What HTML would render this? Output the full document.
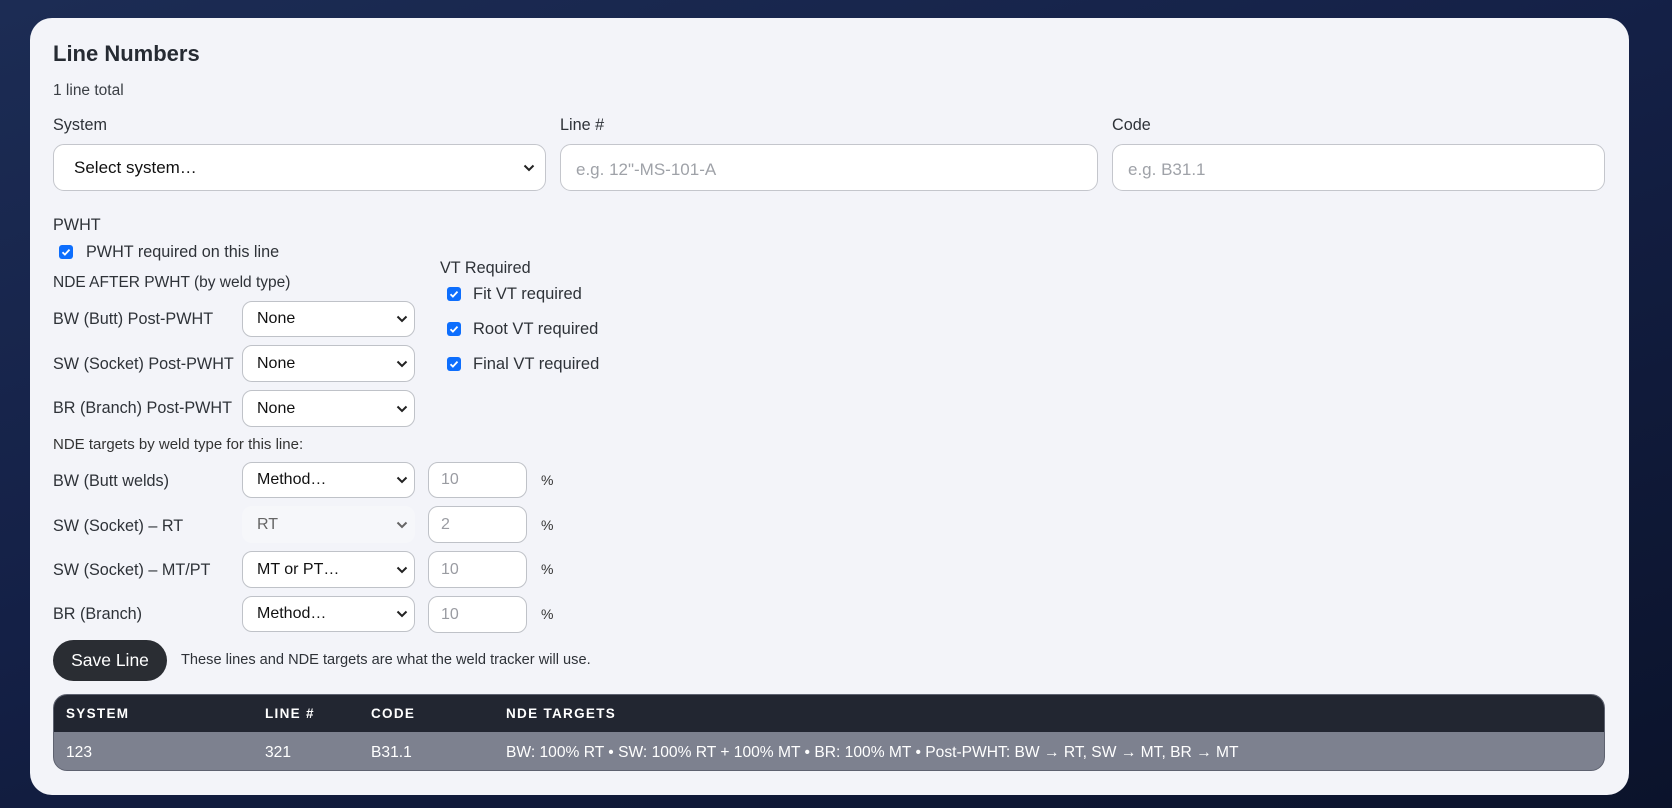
<!DOCTYPE html>
<html><head><meta charset="utf-8"><style>
*{box-sizing:border-box;margin:0;padding:0}
body{width:1672px;height:808px;overflow:hidden;background:linear-gradient(160deg,#1c2c54 0%,#142046 45%,#0b132b 100%);font-family:"Liberation Sans",sans-serif;color:#2b2f36;position:relative}
.card{position:absolute;left:30px;top:18px;width:1599px;height:777px;background:#f3f4f9;border-radius:22px}
.a{position:absolute;white-space:nowrap}
.lbl{font-size:16.2px;color:#2e3238}
.inp{position:absolute;background:#fff;border:1px solid #c4c6cc;border-radius:11px;font-size:17px}
.sel{position:absolute;background:#fff;border:1px solid #bfc2c8;border-radius:10px;font-size:16px;color:#111;padding-left:14px;display:flex;align-items:center}
.sel svg{position:absolute;right:6px;top:50%;margin-top:-4px}
.num{position:absolute;background:#fff;border:1px solid #bfc2c8;border-radius:10px;font-size:16px;color:#9a9ca2;padding-left:12px;display:flex;align-items:center}
.cb{position:absolute;width:14px;height:14px;background:#0d6efd;border-radius:3px}
.cb svg{position:absolute;left:1px;top:1px}
.pct{position:absolute;font-size:14px;color:#333}
.th{position:absolute;top:11px;font-size:13.5px;font-weight:bold;color:#fff;letter-spacing:1.3px;white-space:nowrap}
.td{position:absolute;top:49px;font-size:15.6px;color:#fff;white-space:nowrap}
</style></head><body>
<div class="card"></div>
<div class="a" style="left:53px;top:41px;font-size:22px;font-weight:bold;color:#262b33">Line Numbers</div>
<div class="a" style="left:53px;top:82px;font-size:15.5px;color:#3a3e44">1 line total</div>
<div class="a lbl" style="left:53px;top:116px">System</div>
<div class="a lbl" style="left:560px;top:116px">Line #</div>
<div class="a lbl" style="left:1112px;top:116px">Code</div>
<div class="sel" style="left:53px;top:144px;width:493px;height:47px;border-radius:11px;padding-left:20px;font-size:17px;border-color:#c4c6cc">Select system…<svg width="12" height="8" viewBox="0 0 12 8" style="right:10px"><path d="M1.5 1.5l4.5 4.5 4.5-4.5" stroke="#222" stroke-width="2" fill="none"/></svg></div>
<div class="inp" style="left:560px;top:144px;width:538px;height:47px;padding:15px 0 0 15px;color:#9fa2a8">e.g. 12"-MS-101-A</div>
<div class="inp" style="left:1112px;top:144px;width:493px;height:47px;padding:15px 0 0 15px;color:#9fa2a8">e.g. B31.1</div>

<div class="a lbl" style="left:53px;top:216px">PWHT</div>
<div class="cb" style="left:59px;top:245px"><svg width="12" height="12" viewBox="0 0 12 12"><path d="M2.5 6.2l2.4 2.4 4.6-5" stroke="#fff" stroke-width="1.8" fill="none"/></svg></div>
<div class="a lbl" style="left:86px;top:243px">PWHT required on this line</div>
<div class="a lbl" style="left:53px;top:274px;font-size:15.5px">NDE AFTER PWHT (by weld type)</div>
<div class="a lbl" style="left:440px;top:259px">VT Required</div>
<div class="cb" style="left:447px;top:287px"><svg width="12" height="12" viewBox="0 0 12 12"><path d="M2.5 6.2l2.4 2.4 4.6-5" stroke="#fff" stroke-width="1.8" fill="none"/></svg></div>
<div class="a lbl" style="left:473px;top:285px;font-size:16.5px">Fit VT required</div>
<div class="cb" style="left:447px;top:322px"><svg width="12" height="12" viewBox="0 0 12 12"><path d="M2.5 6.2l2.4 2.4 4.6-5" stroke="#fff" stroke-width="1.8" fill="none"/></svg></div>
<div class="a lbl" style="left:473px;top:320px;font-size:16.5px">Root VT required</div>
<div class="cb" style="left:447px;top:357px"><svg width="12" height="12" viewBox="0 0 12 12"><path d="M2.5 6.2l2.4 2.4 4.6-5" stroke="#fff" stroke-width="1.8" fill="none"/></svg></div>
<div class="a lbl" style="left:473px;top:355px;font-size:16.5px">Final VT required</div>

<div class="a lbl" style="left:53px;top:310px">BW (Butt) Post-PWHT</div>
<div class="sel" style="left:242px;top:301px;width:173px;height:36px">None<svg width="12" height="8" viewBox="0 0 12 8"><path d="M1.5 1.5l4.5 4.5 4.5-4.5" stroke="#222" stroke-width="2" fill="none"/></svg></div>
<div class="a lbl" style="left:53px;top:355px">SW (Socket) Post-PWHT</div>
<div class="sel" style="left:242px;top:345px;width:173px;height:37px">None<svg width="12" height="8" viewBox="0 0 12 8"><path d="M1.5 1.5l4.5 4.5 4.5-4.5" stroke="#222" stroke-width="2" fill="none"/></svg></div>
<div class="a lbl" style="left:53px;top:399px">BR (Branch) Post-PWHT</div>
<div class="sel" style="left:242px;top:390px;width:173px;height:37px">None<svg width="12" height="8" viewBox="0 0 12 8"><path d="M1.5 1.5l4.5 4.5 4.5-4.5" stroke="#222" stroke-width="2" fill="none"/></svg></div>

<div class="a" style="left:53px;top:436px;font-size:15px;color:#333">NDE targets by weld type for this line:</div>

<div class="a lbl" style="left:53px;top:472px">BW (Butt welds)</div>
<div class="sel" style="left:242px;top:462px;width:173px;height:36px">Method…<svg width="12" height="8" viewBox="0 0 12 8"><path d="M1.5 1.5l4.5 4.5 4.5-4.5" stroke="#222" stroke-width="2" fill="none"/></svg></div>
<div class="num" style="left:428px;top:462px;width:99px;height:36px">10</div><div class="pct" style="left:541px;top:472px">%</div>

<div class="a lbl" style="left:53px;top:517px">SW (Socket) – RT</div>
<div class="sel" style="left:242px;top:506px;width:173px;height:37px;background:#f6f7fa;border-color:#f6f7fa;color:#666">RT<svg width="12" height="8" viewBox="0 0 12 8"><path d="M1.5 1.5l4.5 4.5 4.5-4.5" stroke="#666" stroke-width="2" fill="none"/></svg></div>
<div class="num" style="left:428px;top:506px;width:99px;height:37px">2</div><div class="pct" style="left:541px;top:517px">%</div>

<div class="a lbl" style="left:53px;top:561px">SW (Socket) – MT/PT</div>
<div class="sel" style="left:242px;top:551px;width:173px;height:37px">MT or PT…<svg width="12" height="8" viewBox="0 0 12 8"><path d="M1.5 1.5l4.5 4.5 4.5-4.5" stroke="#222" stroke-width="2" fill="none"/></svg></div>
<div class="num" style="left:428px;top:551px;width:99px;height:37px">10</div><div class="pct" style="left:541px;top:561px">%</div>

<div class="a lbl" style="left:53px;top:605px">BR (Branch)</div>
<div class="sel" style="left:242px;top:596px;width:173px;height:36px">Method…<svg width="12" height="8" viewBox="0 0 12 8"><path d="M1.5 1.5l4.5 4.5 4.5-4.5" stroke="#222" stroke-width="2" fill="none"/></svg></div>
<div class="num" style="left:428px;top:596px;width:99px;height:37px">10</div><div class="pct" style="left:541px;top:606px">%</div>

<div class="a" style="left:53px;top:640px;width:114px;height:41px;border-radius:21px;background:#2a2d33;color:#fff;font-size:17.5px;display:flex;align-items:center;justify-content:center">Save Line</div>
<div class="a" style="left:181px;top:652px;font-size:14.6px;color:#2e3238">These lines and NDE targets are what the weld tracker will use.</div>

<div class="a" style="left:53px;top:694px;width:1552px;height:77px;border-radius:14px;overflow:hidden;border:1px solid #5e6270;background:#7d818f">
<div style="position:absolute;left:0;top:0;right:0;height:37px;background:#222631"></div>
<div class="th" style="left:12px">SYSTEM</div>
<div class="th" style="left:211px">LINE #</div>
<div class="th" style="left:317px">CODE</div>
<div class="th" style="left:452px">NDE TARGETS</div>
<div class="td" style="left:12px">123</div>
<div class="td" style="left:211px">321</div>
<div class="td" style="left:317px">B31.1</div>
<div class="td" style="left:452px">BW: 100% RT • SW: 100% RT + 100% MT • BR: 100% MT • Post-PWHT: BW → RT, SW → MT, BR → MT</div>
</div>
</body></html>
